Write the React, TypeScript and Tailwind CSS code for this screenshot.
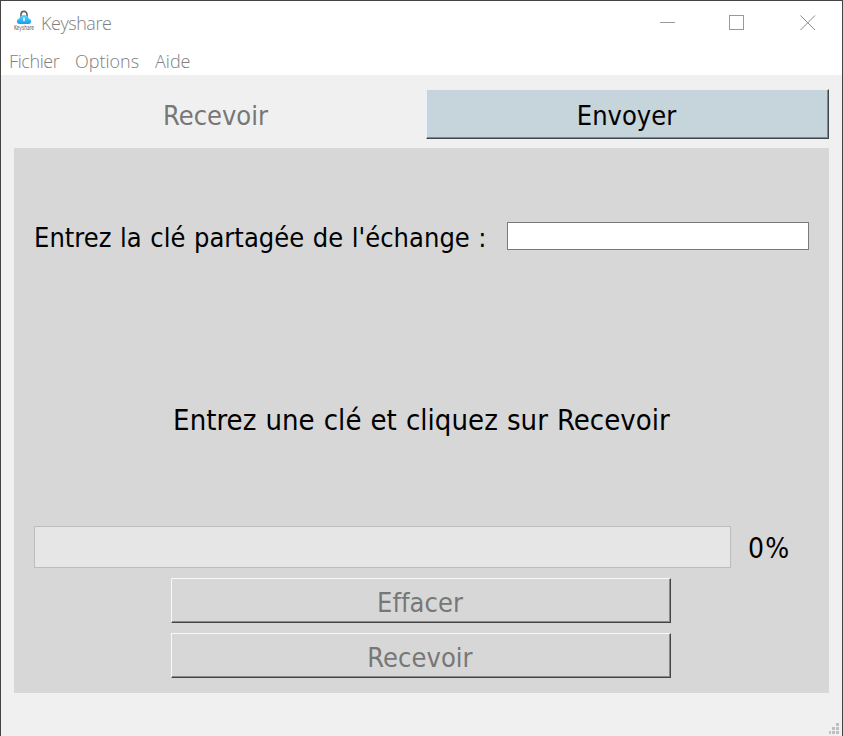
import type { ReactNode } from "react";

const raised =
  "border-t border-l border-b border-r shadow-[inset_-1px_-1px_0_#898989] border-t-[#f8f8f8] border-l-[#f8f8f8] border-b-[#444] border-r-[#444]";

function KeyshareLogo() {
  return (
    <svg width="22" height="26" viewBox="0 0 22 26" className="overflow-visible">
      <defs>
        <linearGradient id="cloud" x1="0" y1="0" x2="0" y2="1">
          <stop offset="0" stopColor="#5ed6fc" />
          <stop offset="1" stopColor="#169cf2" />
        </linearGradient>
      </defs>
      <path d="M8 9V6.4a3 3 0 0 1 6 0V9" fill="none" stroke="#5d6468" strokeWidth="1.6" />
      <path d="M6.4 16A2.6 2.6 0 0 1 5.4 11C6 10.4 6.6 10.2 7 9.6C7.4 8 8.8 7 11 7s3.6 1 4 2.6c.4.6 1 .8 1.6 1.4a2.6 2.6 0 0 1-1 5Z" fill="url(#cloud)" />
      <rect x="10.2" y="9.6" width="1.6" height="3.6" fill="#e9faff" />
      <text x="1" y="21.6" fontSize="7" textLength="20" lengthAdjust="spacingAndGlyphs" fill="#555" fontFamily="'DejaVu Sans Condensed', sans-serif">
        Keyshare
      </text>
    </svg>
  );
}

function TitleBar() {
  return (
    <header className="flex h-[47px] items-start pl-[12px]">
      <div className="mt-[7px] leading-[26px]">
        <KeyshareLogo />
      </div>
      <h1 className="mt-[9px] ml-[6px] text-[18px] leading-[26px] tracking-[-0.45px]">Keyshare</h1>
      <div className="mt-[14px] mr-[26px] ml-auto flex gap-[55px]">
        <svg width="15" height="16" className="mr-[-1px]" shapeRendering="crispEdges">
          <path d="M0 7.5h15" stroke="#999" />
        </svg>
        <svg width="15" height="15" shapeRendering="crispEdges">
          <rect x=".5" y=".5" width="14" height="14" fill="none" stroke="#999" />
        </svg>
        <svg width="16" height="16" className="ml-[1px]">
          <path d="M.5.5l14.5 14.5M15 .5L.5 15" stroke="#8a8a8a" />
        </svg>
      </div>
    </header>
  );
}

function Button({ children }: { children: ReactNode }) {
  return (
    <button className={`flex h-[45px] w-[500px] items-center justify-center bg-[#d7d7d7] pt-[4px] pr-[2px] text-[#777] ${raised}`}>
      <span className="tracking-[0.05px]">{children}</span>
    </button>
  );
}

const gripDots = [
  [8, 0, 3], [4, 4, 3], [8, 4, 3], [1, 8, 2], [4, 8, 3], [8, 8, 3],
];

export default function App() {
  return (
    <div className="flex h-[736px] w-[843px] flex-col border-x border-t border-[#444] bg-[#f0f0f0] font-['DejaVu_Sans_Condensed','DejaVu_Sans',sans-serif] text-[27px] leading-[32px] text-black">
      <div className="h-[74px] shrink-0 bg-white font-['Open_Sans','Noto_Sans',sans-serif] font-light text-[#808080]">
        <TitleBar />
        <nav className="flex gap-[16px] pl-[8px] text-[18px] leading-[26px]">
          <span className="w-[50px] tracking-[-0.4px]">Fichier</span>
          <span className="w-[64px]">Options</span>
          <span>Aide</span>
        </nav>
      </div>
      <main className="flex flex-col px-[13px] pt-[14px]">
        <div className="flex h-[50px]">
          <button className="flex w-[403px] items-center justify-center pt-[3px] text-[#777]">
            <span>Recevoir</span>
          </button>
          <button className="ml-[9px] flex flex-1 items-center justify-center border border-t-[#e4f2fa] border-r-[#3e474b] border-b-[#3e474b] border-l-[#e4f2fa] bg-[#c6d4dc] pt-[3px] pr-[2px] shadow-[inset_-1px_-1px_0_#7c888e]">
            <span>Envoyer</span>
          </button>
        </div>
        <section className="mt-[9px] flex h-[545px] flex-col bg-[#d7d7d7] px-[20px] pt-[74px]">
          <div className="flex h-[28px] items-center">
            <label className="w-[473px] pt-[3px] tracking-[0.03px] whitespace-nowrap [word-spacing:0.8px]">
              Entrez la clé partagée de l'échange :
            </label>
            <input className="h-[28px] w-[302px] border border-[#7a7a7a] bg-white text-base outline-none" />
          </div>
          <p className="mt-[153px] text-center text-[29px] leading-[34px] tracking-[0.04px] [word-spacing:0.7px]">
            Entrez une clé et cliquez sur Recevoir
          </p>
          <div className="mt-[89px] flex h-[42px] items-center">
            <div className="h-[42px] w-[697px] border border-[#bcbcbc] bg-[#e6e6e6]" />
            <span className="ml-[17px] pt-[3px] text-[28px] tracking-[1.3px]">0%</span>
          </div>
          <div className="mt-[10px] ml-[137px] flex flex-col items-start gap-[10px]">
            <Button>Effacer</Button>
            <Button>Recevoir</Button>
          </div>
        </section>
      </main>
      <footer className="flex flex-1 items-end justify-end pr-[3px] pb-[2px]">
        <svg width="11" height="11" shapeRendering="crispEdges">
          {gripDots.map(([x, y, w]) => (
            <rect key={`${x}-${y}`} x={x} y={y} width={w} height="3" fill="#bfbfbf" />
          ))}
        </svg>
      </footer>
    </div>
  );
}
